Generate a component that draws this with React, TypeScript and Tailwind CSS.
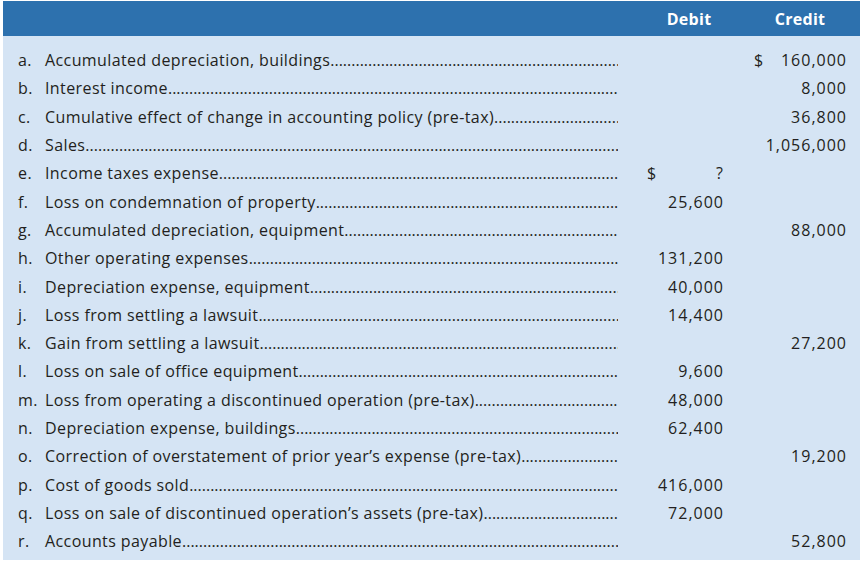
import React from "react";

type Row = { k: string; label: string; debit?: string; credit?: string; dDollar?: boolean; cDollar?: boolean };

const rows: Row[] = [
  { k: "a.", label: "Accumulated depreciation, buildings", credit: "160,000", cDollar: true },
  { k: "b.", label: "Interest income", credit: "8,000" },
  { k: "c.", label: "Cumulative effect of change in accounting policy (pre-tax)", credit: "36,800" },
  { k: "d.", label: "Sales", credit: "1,056,000" },
  { k: "e.", label: "Income taxes expense", debit: "?", dDollar: true },
  { k: "f.", label: "Loss on condemnation of property", debit: "25,600" },
  { k: "g.", label: "Accumulated depreciation, equipment", credit: "88,000" },
  { k: "h.", label: "Other operating expenses", debit: "131,200" },
  { k: "i.", label: "Depreciation expense, equipment", debit: "40,000" },
  { k: "j.", label: "Loss from settling a lawsuit", debit: "14,400" },
  { k: "k.", label: "Gain from settling a lawsuit", credit: "27,200" },
  { k: "l.", label: "Loss on sale of office equipment", debit: "9,600" },
  { k: "m.", label: "Loss from operating a discontinued operation (pre-tax)", debit: "48,000" },
  { k: "n.", label: "Depreciation expense, buildings", debit: "62,400" },
  { k: "o.", label: "Correction of overstatement of prior year\u2019s expense (pre-tax)", credit: "19,200" },
  { k: "p.", label: "Cost of goods sold", debit: "416,000" },
  { k: "q.", label: "Loss on sale of discontinued operation\u2019s assets (pre-tax)", debit: "72,000" },
  { k: "r.", label: "Accounts payable", credit: "52,800" },
];

const dots = ".".repeat(200);

export default function App() {
  return (
    <div
      className="w-[860px] h-[563px] bg-white pl-[3px] pt-[1px] text-[#231f20]"
      style={{ fontFamily: "'Open Sans', sans-serif" }}
    >
      <div className="flex h-[35px] bg-[#2d71ae] text-white font-bold text-[16px] tracking-[0.3px] items-center">
        <div className="flex-1" />
        <div className="w-[112px] pl-[30px] text-center">Debit</div>
        <div className="w-[130px] pl-[24px] pr-[14px] text-center">Credit</div>
      </div>
      <div className="bg-[#d5e4f4] pt-[10px] pb-[5px]">
        {rows.map((r) => (
          <div key={r.k} className="flex h-[28.3px] items-center text-[16px] leading-[20px]">
            <div className="flex flex-1 min-w-0 items-center pl-[15px] tracking-[0.4px]">
              <span className="w-[27px] shrink-0">{r.k}</span>
              <span className="shrink-0 whitespace-nowrap">{r.label}</span>
              <span className="flex-1 overflow-hidden whitespace-nowrap tracking-[0px]">{dots}</span>
            </div>
            <div className="w-[112px] flex justify-between pl-[29px] pr-[6px] tracking-[1px]">
              <span>{r.dDollar ? "$" : ""}</span>
              <span>{r.debit ?? ""}</span>
            </div>
            <div className="w-[130px] flex justify-between pl-[24px] pr-[13px] tracking-[1px]">
              <span>{r.cDollar ? "$" : ""}</span>
              <span>{r.credit ?? ""}</span>
            </div>
          </div>
        ))}
      </div>
    </div>
  );
}
